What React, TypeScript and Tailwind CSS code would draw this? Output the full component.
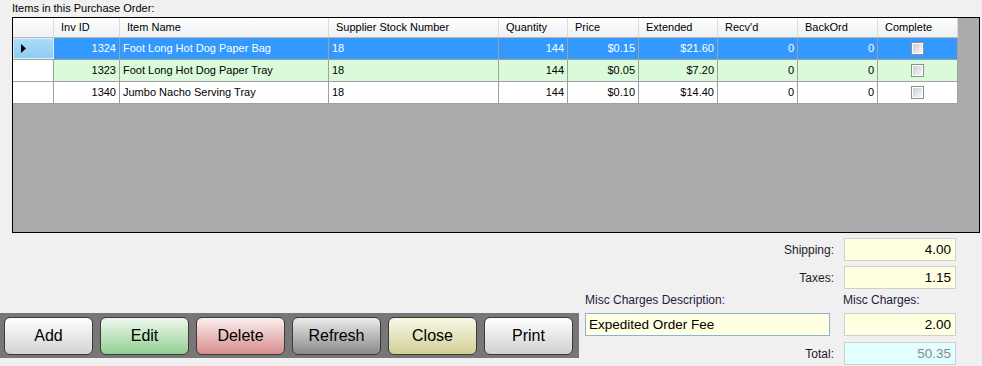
import React from 'react';

type Row = {
  id: string;
  name: string;
  supplier: string;
  qty: string;
  price: string;
  ext: string;
  recv: string;
  back: string;
};

const rows: Row[] = [
  { id: '1324', name: 'Foot Long Hot Dog Paper Bag', supplier: '18', qty: '144', price: '$0.15', ext: '$21.60', recv: '0', back: '0' },
  { id: '1323', name: 'Foot Long Hot Dog Paper Tray', supplier: '18', qty: '144', price: '$0.05', ext: '$7.20', recv: '0', back: '0' },
  { id: '1340', name: 'Jumbo Nacho Serving Tray', supplier: '18', qty: '144', price: '$0.10', ext: '$14.40', recv: '0', back: '0' },
];

const rowBg = ['bg-[#3399ff] text-white', 'bg-[#d9fbd9] text-black', 'bg-white text-black'];

const Checkbox: React.FC = () => (
  <div className="w-[13px] h-[13px] border border-[#8e8f8f] bg-white p-px">
    <div className="w-full h-full bg-linear-to-br from-[#cbcfd5] to-[#f6f6f6]" />
  </div>
);

const HeaderCell: React.FC<{ w: string; children?: React.ReactNode }> = ({ w, children }) => (
  <div className={`${w} h-full border-r border-[#dcdcdc] pl-[7px] flex items-center`}>{children}</div>
);

const buttons = [
  { label: 'Add', cls: 'from-[#ffffff] to-[#d3d3d3]' },
  { label: 'Edit', cls: 'from-[#eef8ee] to-[#92cf92]' },
  { label: 'Delete', cls: 'from-[#fbefef] to-[#d58d8d]' },
  { label: 'Refresh', cls: 'from-[#ececec] to-[#8a8a8a]' },
  { label: 'Close', cls: 'from-[#f8f8e6] to-[#d2cf98]' },
  { label: 'Print', cls: 'from-[#ffffff] to-[#d0d0d0]' },
];

const Field: React.FC<{ value: string; w: string; bg?: string; color?: string; border?: string; align?: string }> = ({
  value,
  w,
  bg = 'bg-[#ffffe1]',
  color = 'text-black',
  border = 'border-[#cfcfcf]',
  align = 'justify-end pr-[4px]',
}) => (
  <div className={`${w} h-[23px] border ${border} ${bg} ${color} flex items-center ${align} text-[13.5px] leading-none`}>
    {value}
  </div>
);

export default function App() {
  return (
    <div className="w-[982px] h-[366px] bg-[#f0f0f0] overflow-hidden font-['Liberation_Sans',Arial,sans-serif] text-black">
      <div className="pl-[12px] pt-[2px] h-[17px] text-[11px] leading-[13px]">Items in this Purchase Order:</div>

      {/* grid */}
      <div className="ml-[12px] w-[968px] h-[216px] border border-black bg-[#ababab] text-[11px]">
        <div className="w-[945px] bg-white">
          <div className="flex h-[20px] bg-linear-to-b from-white to-[#eef0f3] border-b border-[#b8b8b8]">
            <div className="w-[41px] h-full border-r border-[#dcdcdc]" />
            <HeaderCell w="w-[66px]">Inv ID</HeaderCell>
            <HeaderCell w="w-[209px]">Item Name</HeaderCell>
            <HeaderCell w="w-[170px]">Supplier Stock Number</HeaderCell>
            <HeaderCell w="w-[69px]">Quantity</HeaderCell>
            <HeaderCell w="w-[71px]">Price</HeaderCell>
            <HeaderCell w="w-[79px]">Extended</HeaderCell>
            <HeaderCell w="w-[80px]">Recv'd</HeaderCell>
            <HeaderCell w="w-[80px]">BackOrd</HeaderCell>
            <HeaderCell w="w-[80px]">Complete</HeaderCell>
          </div>
          {rows.map((r, i) => (
            <div key={r.id} className="flex h-[22px] border-b border-[#a0a0a0]">
              <div
                className={`w-[41px] h-full border-r border-[#a0a0a0] flex items-center pl-[7px] ${
                  i === 0 ? 'bg-linear-to-b from-[#a9dcf8] to-[#8fcdf3] border border-[#dfeffa]' : 'bg-white'
                }`}
              >
                {i === 0 && (
                  <svg width="6" height="9" viewBox="0 0 6 9">
                    <path d="M0 0 L5 4.5 L0 9 Z" fill="#000" />
                  </svg>
                )}
              </div>
              <div className={`flex h-full ${rowBg[i]}`}>
                <div className="w-[66px] border-r border-[#a0a0a0] flex items-center justify-end pr-[3px]">{r.id}</div>
                <div className="w-[209px] border-r border-[#a0a0a0] flex items-center pl-[3px]">{r.name}</div>
                <div className="w-[170px] border-r border-[#a0a0a0] flex items-center pl-[3px]">{r.supplier}</div>
                <div className="w-[69px] border-r border-[#a0a0a0] flex items-center justify-end pr-[3px]">{r.qty}</div>
                <div className="w-[71px] border-r border-[#a0a0a0] flex items-center justify-end pr-[3px]">{r.price}</div>
                <div className="w-[79px] border-r border-[#a0a0a0] flex items-center justify-end pr-[3px]">{r.ext}</div>
                <div className="w-[80px] border-r border-[#a0a0a0] flex items-center justify-end pr-[3px]">{r.recv}</div>
                <div className="w-[80px] border-r border-[#a0a0a0] flex items-center justify-end pr-[3px]">{r.back}</div>
                <div className="w-[80px] border-r border-[#a0a0a0] flex items-center justify-center">
                  <Checkbox />
                </div>
              </div>
            </div>
          ))}
        </div>
      </div>

      {/* bottom area */}
      <div className="flex">
        <div className="w-[579px] pt-[80px]">
          <div className="h-[45px] bg-[#777777] flex items-center gap-[7px] pl-[4px]">
            {buttons.map((b) => (
              <button
                key={b.label}
                className={`w-[89px] h-[38px] rounded-[6px] border border-[#3a3a3a] bg-linear-to-b ${b.cls} text-[16px] text-black`}
              >
                {b.label}
              </button>
            ))}
          </div>
        </div>

        <div className="ml-[6px] w-[371px] text-[12px]">
          <div className="flex items-center justify-end mt-[5px]">
            <span className="mr-[10px] text-[#1c1c2c]">Shipping:</span>
            <Field value="4.00" w="w-[112px]" />
          </div>
          <div className="flex items-center justify-end mt-[5px]">
            <span className="mr-[10px] text-[#1c1c2c]">Taxes:</span>
            <Field value="1.15" w="w-[112px]" />
          </div>
          <div className="flex h-[24px] items-center pb-[2px] text-[#1c1c3c]">
            <span className="w-[258px]">Misc Charges Description:</span>
            <span>Misc Charges:</span>
          </div>
          <div className="flex items-center justify-between">
            <Field value="Expedited Order Fee" w="w-[245px]" border="border-[#8fb0d6]" align="justify-start pl-[3px]" />
            <Field value="2.00" w="w-[112px]" />
          </div>
          <div className="flex items-center justify-end mt-[6px]">
            <span className="mr-[10px] text-[#1c1c2c]">Total:</span>
            <Field value="50.35" w="w-[112px]" bg="bg-[#e1ffff]" color="text-[#8a8a8a]" />
          </div>
        </div>
      </div>
    </div>
  );
}
